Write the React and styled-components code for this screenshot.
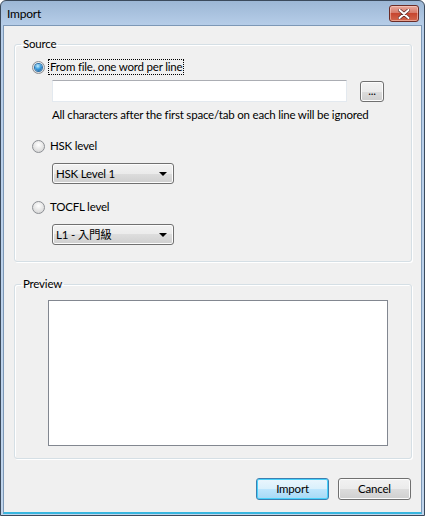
import React from 'react'
import styled, { createGlobalStyle, css } from 'styled-components'

const Global = createGlobalStyle`
html, body {
  margin: 0;
  padding: 0;
  background: #ffffff;
}
body {
  font-family: Lato, "Noto Sans", "Noto Sans CJK TC", sans-serif;
  font-size: 11.5px;
  letter-spacing: -0.2px;
  color: #000;
}
`

function Radio({ checked }) {
  return (
    <RadioCircle>
      {checked && <RadioDot />}
    </RadioCircle>
  )
}

function Option({ label, checked, focused }) {
  return (
    <OptionRow>
      <Radio checked={checked} />
      <OptionLabel $focused={focused}>{label}</OptionLabel>
    </OptionRow>
  )
}

function Combo({ value }) {
  return (
    <ComboBox>
      <ComboText>{value}</ComboText>
      <Arrow />
    </ComboBox>
  )
}

function App() {
  return (
    <>
      <Global />
      <Window>
        <TitleBar>
          <Title>Import</Title>
          <CloseButton>
            <svg width="12" height="10" viewBox="0 0 12 10">
              <path d="M1.5 1 L10.5 9 M10.5 1 L1.5 9" stroke="#5a2a2a" strokeWidth="3.4" strokeLinecap="round" />
              <path d="M1.5 1 L10.5 9 M10.5 1 L1.5 9" stroke="#ffffff" strokeWidth="2" strokeLinecap="round" />
            </svg>
          </CloseButton>
        </TitleBar>
        <Client>
          <Group>
            <Legend>Source</Legend>
            <SourceBody>
              <Option checked focused label="From file, one word per line" />
              <FileRow>
                <TextBox />
                <BrowseButton>...</BrowseButton>
              </FileRow>
              <Hint>All characters after the first space/tab on each line will be ignored</Hint>
              <Spacer $h={16} />
              <Option label="HSK level" />
              <Indent $top={9}>
                <Combo value="HSK Level 1" />
              </Indent>
              <Spacer $h={15} />
              <Option label="TOCFL level" />
              <Indent $top={9}>
                <Combo value="L1 - 入門級" />
              </Indent>
            </SourceBody>
          </Group>
          <Group $top={15}>
            <Legend>Preview</Legend>
            <PreviewBody>
              <PreviewBox />
            </PreviewBody>
          </Group>
          <ButtonRow>
            <Button $default>Import</Button>
            <Button>Cancel</Button>
          </ButtonRow>
        </Client>
      </Window>
    </>
  )
}

export default App

const Window = styled.div`
width: 425px;
height: 516px;
box-sizing: border-box;
display: flex;
flex-direction: column;
border: 1px solid #3b4a5c;
border-radius: 6px 6px 0 0;
background: linear-gradient(to bottom, #9cb7d5 0, #b6cde8 24px, #c0d5ec 100%);
overflow: hidden;
`

const TitleBar = styled.div`
height: 24px;
display: flex;
align-items: flex-start;
justify-content: space-between;
padding: 0 5px 0 6px;
flex-shrink: 0;
`

const Title = styled.div`
margin-top: 5px;
font-size: 12px;
line-height: 15px;
color: #000;
`

const CloseButton = styled.div`
margin-top: 4px;
width: 30px;
height: 17px;
box-sizing: border-box;
display: flex;
align-items: center;
justify-content: center;
border: 1px solid #6b2c26;
border-radius: 3px;
background: linear-gradient(to bottom, #e9a99c 0%, #d77b6a 45%, #c7462f 50%, #d2674d 100%);
box-shadow: inset 0 0 0 1px rgba(255, 220, 210, 0.5);
`

const Client = styled.div`
flex: 1;
display: flex;
flex-direction: column;
margin: 0 2px 1px 2px;
border: 1px solid #7d98b6;
border-bottom: 2px solid #39b6df;
background: #f0f0f0;
`

const Group = styled.fieldset`
margin: ${p => p.$top ?? 11}px 9px 0 10px;
padding: 0;
min-width: 0;
border: 1px solid #d5dfe5;
border-radius: 3px;
box-shadow: inset 1px 1px 0 #ffffff, 1px 1px 0 #ffffff;
`

const Legend = styled.legend`
margin-left: 6px;
padding: 0 2px;
line-height: 14px;
color: #000;
`

const SourceBody = styled.div`
display: flex;
flex-direction: column;
align-items: flex-start;
padding: 8px 18px 16px 17px;
`

const OptionRow = styled.div`
display: flex;
align-items: center;
height: 16px;
`

const RadioCircle = styled.div`
width: 13px;
height: 13px;
box-sizing: border-box;
border-radius: 50%;
border: 1px solid #8c8f94;
background: radial-gradient(circle at 50% 35%, #ffffff 0%, #e4e4e4 55%, #cfcfcf 100%);
display: flex;
align-items: center;
justify-content: center;
margin-right: 3px;
`

const RadioDot = styled.div`
width: 7px;
height: 7px;
border-radius: 50%;
background: radial-gradient(circle at 40% 30%, #c6effd 0%, #3d9fe0 45%, #0f4f90 100%);
box-shadow: 0 0 0 1px #2b6fa8;
`

const OptionLabel = styled.span`
line-height: 14px;
padding: 0 1px;
border: 1px dotted ${p => (p.$focused ? '#000' : 'transparent')};
`

const FileRow = styled.div`
display: flex;
align-items: center;
margin: 5px 0 0 20px;
`

const TextBox = styled.div`
width: 295px;
height: 22px;
box-sizing: border-box;
background: #ffffff;
border: 1px solid #e3e9ef;
border-top-color: #abadb3;
`

const buttonFace = css`
box-sizing: border-box;
border: 1px solid #707070;
border-radius: 3px;
background: linear-gradient(to bottom, #f2f2f2 0%, #ebebeb 50%, #dddddd 50%, #cfcfcf 100%);
box-shadow: inset 0 0 0 1px #fcfcfc;
`

const BrowseButton = styled.div`
${buttonFace}
width: 24px;
height: 21px;
margin-left: 13px;
display: flex;
align-items: flex-end;
justify-content: center;
line-height: 12px;
padding-bottom: 4px;
`

const Hint = styled.div`
margin: 5px 0 0 20px;
line-height: 15px;
white-space: nowrap;
`

const Spacer = styled.div`
height: ${p => p.$h}px;
`

const Indent = styled.div`
margin: ${p => p.$top}px 0 0 20px;
`

const ComboBox = styled.div`
${buttonFace}
width: 122px;
height: 21px;
display: flex;
align-items: center;
justify-content: space-between;
padding: 0 6px 0 3px;
`

const ComboText = styled.span`
line-height: 14px;
`

const Arrow = styled.span`
width: 0;
height: 0;
border-left: 4px solid transparent;
border-right: 4px solid transparent;
border-top: 4px solid #000;
margin-top: 1px;
`

const PreviewBody = styled.div`
padding: 9px 23px 12px 33px;
`

const PreviewBox = styled.div`
height: 146px;
box-sizing: border-box;
background: #ffffff;
border: 1px solid #828790;
`

const ButtonRow = styled.div`
display: flex;
justify-content: flex-end;
gap: 9px;
margin-top: 19px;
padding-right: 10px;
`

const Button = styled.div`
${buttonFace}
width: 73px;
height: 22px;
display: flex;
align-items: center;
justify-content: center;
line-height: 14px;
${p =>
  p.$default &&
  css`
    border-color: #3c7fb1;
    background: linear-gradient(to bottom, #eaf6fd 0%, #d9f0fc 50%, #bee6fd 50%, #a7d9f5 100%);
    box-shadow: inset 0 0 0 1px #48d1fb;
  `}
`
